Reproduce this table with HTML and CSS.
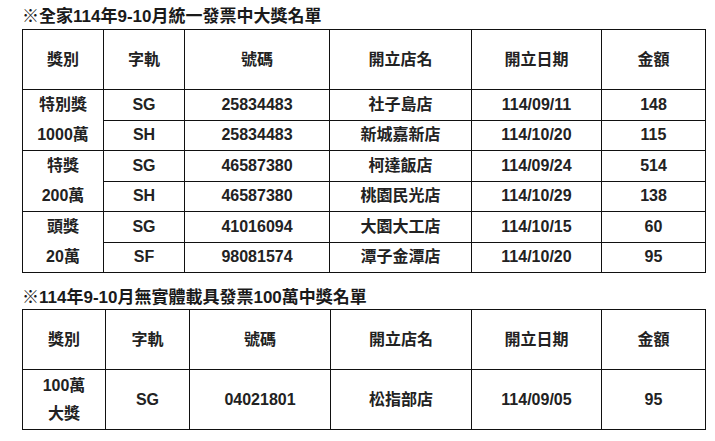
FILE: index.html
```html
<!DOCTYPE html>
<html lang="zh-Hant">
<head>
<meta charset="utf-8">
<link rel="stylesheet" href="styles.css">
</head>
<body>
<div class="page">
  <div class="title t1">※全家114年9-10月統一發票中大獎名單</div>
  <table class="prize p1">
    <colgroup>
      <col class="c1"><col class="c2"><col class="c3"><col class="c4"><col class="c5"><col class="c6">
    </colgroup>
    <tr class="head"><th>獎別</th><th>字軌</th><th>號碼</th><th>開立店名</th><th>開立日期</th><th>金額</th></tr>
    <tr><td rowspan="2" class="kind"><span class="ln">特別獎</span><span class="ln">1000萬</span></td><td>SG</td><td>25834483</td><td>社子島店</td><td>114/09/11</td><td>148</td></tr>
    <tr><td>SH</td><td>25834483</td><td>新城嘉新店</td><td>114/10/20</td><td>115</td></tr>
    <tr><td rowspan="2" class="kind"><span class="ln">特獎</span><span class="ln">200萬</span></td><td>SG</td><td>46587380</td><td>柯達飯店</td><td>114/09/24</td><td>514</td></tr>
    <tr><td>SH</td><td>46587380</td><td>桃園民光店</td><td>114/10/29</td><td>138</td></tr>
    <tr><td rowspan="2" class="kind"><span class="ln">頭獎</span><span class="ln">20萬</span></td><td>SG</td><td>41016094</td><td>大園大工店</td><td>114/10/15</td><td>60</td></tr>
    <tr><td>SF</td><td>98081574</td><td>潭子金潭店</td><td>114/10/20</td><td>95</td></tr>
  </table>

  <div class="title t2">※114年9-10月無實體載具發票100萬中獎名單</div>
  <table class="prize p2">
    <colgroup>
      <col class="d1"><col class="d2"><col class="d3"><col class="d4"><col class="d5"><col class="d6">
    </colgroup>
    <tr class="head"><th>獎別</th><th>字軌</th><th>號碼</th><th>開立店名</th><th>開立日期</th><th>金額</th></tr>
    <tr class="tall"><td class="kind"><span class="ln sm">100萬</span><span class="ln sm">大獎</span></td><td>SG</td><td>04021801</td><td>松指部店</td><td>114/09/05</td><td>95</td></tr>
  </table>
</div>
</body>
</html>
```

FILE: styles.css
```css
html, body {
  margin: 0;
  padding: 0;
  background: #ffffff;
}

body {
  font-family: "Liberation Sans", "Noto Sans CJK TC", sans-serif;
  font-weight: 700;
  color: #222222;
}

.page {
  padding-left: 22px;
  padding-top: 6px;
}

.title {
  font-size: 17px;
  line-height: 18px;
  height: 22px;
  padding-top: 2px;
  box-sizing: border-box;
  overflow: visible;
  color: #1a1a1a;
  white-space: nowrap;
}

.t1 {
  margin-bottom: 1px;
}

.t2 {
  margin-top: 14px;
  margin-bottom: 0;
}

.prize {
  border-collapse: collapse;
  table-layout: fixed;
  width: 684px;
}

.prize th,
.prize td {
  border: 1px solid #111111;
  padding: 0;
  text-align: center;
  vertical-align: middle;
  font-size: 16px;
  font-weight: 700;
  line-height: 20px;
  height: 29px;
}

.prize .head th {
  height: 59px;
}

.ln {
  display: block;
  height: 30px;
  line-height: 30px;
}

.ln.sm {
  height: 28px;
  line-height: 28px;
}

.p2 .tall td {
  height: 59px;
}

.c1 { width: 81px; }
.c2 { width: 81px; }
.c3 { width: 145px; }
.c4 { width: 142px; }
.c5 { width: 130px; }
.c6 { width: 104px; }

.d1 { width: 83px; }
.d2 { width: 84px; }
.d3 { width: 141px; }
.d4 { width: 141px; }
.d5 { width: 130px; }
.d6 { width: 104px; }
```
